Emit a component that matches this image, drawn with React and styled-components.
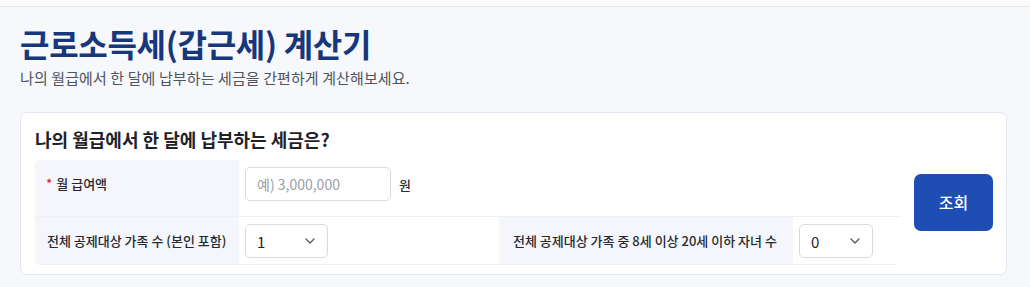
import React from "react";
import styled, { createGlobalStyle } from "styled-components";

const Global = createGlobalStyle`
  html, body { margin: 0; padding: 0; background: #f6f8fc; }
  body { font-family: "Noto Sans CJK KR", "Noto Sans", sans-serif; color: #222; }
  * { box-sizing: border-box; }
`;

const TopBar = styled.div`
  height: 7px;
  background: #fbfbfc;
  border-bottom: 1px solid #e6e8ee;
`;

const Main = styled.main`
  padding: 0 23px 0 20px;
`;

const Title = styled.h1`
  margin: 16px 0 0;
  font-size: 32px;
  line-height: 40px;
  font-weight: 700;
  color: #16377a;
  letter-spacing: -0.3px;
`;

const Subtitle = styled.p`
  margin: 5px 0 0;
  font-size: 15px;
  line-height: 20px;
  color: #50555d;
  letter-spacing: 0.1px;
`;

const Card = styled.section`
  margin-top: 24px;
  background: #ffffff;
  border: 1px solid #e2e7f1;
  border-radius: 7px;
  padding: 16px 13px 9px 14px;
  display: flex;
  gap: 14px;
`;

const FormArea = styled.div`
  flex: 1;
  min-width: 0;
`;

const CardHeading = styled.h2`
  margin: 0 0 11px;
  font-size: 18px;
  line-height: 20px;
  font-weight: 700;
  color: #1f2329;
`;

const Table = styled.div`
  display: grid;
  grid-template-columns: 204px 260px 294px 1fr;
  border-radius: 5px;
  overflow: hidden;
  border-bottom: 1px solid #edf0f6;
`;

const Cell = styled.div`
  display: flex;
  align-items: flex-start;
  gap: 8px;
  padding: ${(p) => (p.$first ? "7px 6px 15px" : "7px 6px 6px")};
  background: ${(p) => (p.$label ? "#f4f6fb" : "#ffffff")};
  border-bottom: ${(p) => (p.$first ? "1px solid #edf0f6" : "none")};
  grid-column: ${(p) => p.$span || "auto"};
`;

const Label = styled.span`
  display: flex;
  align-items: center;
  height: 33px;
  padding-left: ${(p) => p.$pad || 6}px;
  font-size: 13px;
  font-weight: 500;
  color: #26292e;
  white-space: nowrap;
`;

const Required = styled.span`
  color: #e5262c;
  margin-right: 4px;
  font-size: 13px;
`;

const Input = styled.input`
  width: 146px;
  height: 34px;
  border: 1px solid #d6dae2;
  border-radius: 5px;
  padding: 0 11px;
  font-family: inherit;
  font-size: 14px;
  color: #222;
  background: #fff;
  outline: none;
  &::placeholder { color: #9a9ea6; }
`;

const Unit = styled.span`
  display: flex;
  align-items: center;
  height: 34px;
  font-size: 13px;
  font-weight: 500;
  color: #2b2e33;
`;

const Select = styled.div`
  width: ${(p) => p.$w}px;
  height: 34px;
  border: 1px solid #d6dae2;
  border-radius: 5px;
  background: #fff;
  display: flex;
  align-items: center;
  justify-content: space-between;
  padding: 0 12px 0 11px;
  font-size: 15px;
  color: #1f2226;
`;

const Button = styled.button`
  align-self: center;
  margin-top: 10px;
  width: 79px;
  height: 57px;
  border: none;
  border-radius: 7px;
  background: #1e4db3;
  color: #fff;
  font-family: inherit;
  font-size: 16px;
  font-weight: 500;
  cursor: pointer;
`;

const Chevron = () => (
  <svg width="10" height="6" viewBox="0 0 10 6" fill="none">
    <path d="M1 1l4 4 4-4" stroke="#555a62" strokeWidth="1.3" strokeLinecap="round" strokeLinejoin="round" />
  </svg>
);

export default function App() {
  return (
    <>
      <Global />
      <TopBar />
      <Main>
        <Title>근로소득세(갑근세) 계산기</Title>
        <Subtitle>나의 월급에서 한 달에 납부하는 세금을 간편하게 계산해보세요.</Subtitle>
        <Card>
          <FormArea>
            <CardHeading>나의 월급에서 한 달에 납부하는 세금은?</CardHeading>
            <Table>
              <Cell $label $first>
                <Label $pad={5}>
                  <Required>*</Required>월 급여액
                </Label>
              </Cell>
              <Cell $first $span="2 / 5">
                <Input placeholder="예) 3,000,000" />
                <Unit>원</Unit>
              </Cell>
              <Cell $label>
                <Label>전체 공제대상 가족 수 (본인 포함)</Label>
              </Cell>
              <Cell>
                <Select $w={83}>
                  <span>1</span>
                  <Chevron />
                </Select>
              </Cell>
              <Cell $label>
                <Label $pad={8}>전체 공제대상 가족 중 8세 이상 20세 이하 자녀 수</Label>
              </Cell>
              <Cell>
                <Select $w={74}>
                  <span>0</span>
                  <Chevron />
                </Select>
              </Cell>
            </Table>
          </FormArea>
          <Button type="button">조회</Button>
        </Card>
      </Main>
    </>
  );
}
